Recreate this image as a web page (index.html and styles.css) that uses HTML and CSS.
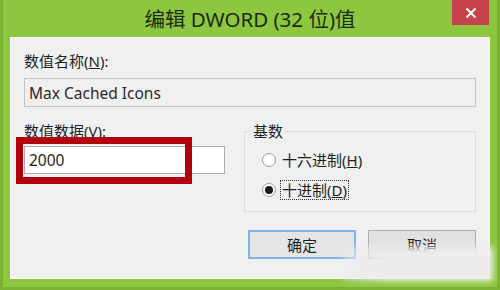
FILE: index.html
```html
<!DOCTYPE html>
<html lang="zh-CN">
<head>
    <meta charset="UTF-8">
    <title>编辑 DWORD (32 位)值</title>
    <link rel="stylesheet" href="styles.css">
</head>
<body>
    <div class="window">
        <div class="titlebar">
            <div class="title">编辑 DWORD (32 位)值</div>
            <div class="close-btn">
                <svg width="12" height="12" viewBox="0 0 12 12">
                    <path d="M1.5 1.5 L10.5 10.5 M10.5 1.5 L1.5 10.5" stroke="#fff" stroke-width="2" fill="none"/>
                </svg>
            </div>
        </div>

        <div class="client">
            <div class="field-label">数值名称(<u>N</u>):</div>
            <div class="textbox readonly">Max Cached Icons</div>

            <div class="value-row">
                <div class="data-col">
                    <div class="field-label">数值数据(<u>V</u>):</div>
                    <div class="textbox data">2000</div>
                    <!-- 红框标注 -->
                    <div class="highlight"></div>
                </div>

                <fieldset class="base-group">
                    <legend>基数</legend>
                    <div class="radio">
                        <span class="radio-circle"></span>
                        <span class="radio-text">十六进制(<u>H</u>)</span>
                    </div>
                    <div class="radio checked">
                        <span class="radio-circle"></span>
                        <span class="radio-text focused">十进制(<u>D</u>)</span>
                    </div>
                </fieldset>
            </div>

            <div class="buttons">
                <div class="btn default">确定</div>
                <div class="btn">取消</div>
            </div>
        </div>

        <div class="watermark"></div>
    </div>
</body>
</html>
```

FILE: styles.css
```css
* {
    margin: 0;
    padding: 0;
    box-sizing: border-box;
}

body {
    width: 500px;
    height: 290px;
    overflow: hidden;
    background: #8dc63f;
    font-family: "Noto Sans", "Noto Sans CJK SC", sans-serif;
    color: #1e1e1e;
}

.window {
    position: relative;
    height: 290px;
    background: #8dc63f;
    box-shadow: inset 3px 0 #7cb232, inset -3px 0 #7cb232, inset 0 -3px #7cb232;
}

.titlebar {
    position: relative;
    height: 37px;
}

.title {
    text-align: center;
    font-size: 20.5px;
    line-height: 38px;
    color: #1d2a12;
}

.close-btn {
    position: absolute;
    top: 0;
    right: 11px;
    width: 37px;
    height: 25px;
    background: #c7434b;
    display: flex;
    align-items: center;
    justify-content: center;
}

.client {
    margin: 0 10px;
    height: 242px;
    background: #f0f0f0;
    border: 1px solid #fbfbfb;
    padding: 15px 13px 0 13px;
}

.field-label {
    font-size: 15px;
    line-height: 16px;
    height: 16px;
    white-space: nowrap;
}

.textbox {
    font-size: 15.5px;
    padding-left: 4px;
    display: flex;
    align-items: center;
    white-space: nowrap;
}

.textbox.readonly {
    margin-top: 9px;
    height: 29px;
    border: 1px solid #c3c3c3;
    background: #f0f0f0;
    color: #2a2a2a;
}

.value-row {
    display: flex;
    margin-top: 16px;
}

.data-col {
    position: relative;
    width: 201px;
}

.textbox.data {
    margin-top: 7px;
    height: 28px;
    border: 1px solid #abadb3;
    background: #fff;
}

.highlight {
    position: absolute;
    left: -8px;
    top: 14px;
    width: 176px;
    height: 47px;
    border: 7px solid #b1000e;
}

.base-group {
    margin-left: 19px;
    width: 232px;
    border: 1px solid #dcdcdc;
    padding: 0 0 11px 17px;
}

.base-group legend {
    font-size: 15px;
    line-height: 16px;
    margin-left: -11px;
    padding: 0 2px;
}

.radio {
    display: flex;
    align-items: center;
    height: 20px;
    margin-top: 10px;
    font-size: 15px;
}

.radio:first-of-type {
    margin-top: 11px;
}

.radio-circle {
    width: 14px;
    height: 14px;
    border-radius: 50%;
    border: 1px solid #9a9a9a;
    background: #fff;
    display: flex;
    align-items: center;
    justify-content: center;
}

.radio.checked .radio-circle::after {
    content: "";
    width: 8px;
    height: 8px;
    border-radius: 50%;
    background: #1a1a1a;
}

.radio-text {
    margin-left: 4px;
    height: 20px;
    line-height: 18px;
    padding: 0 1px;
    border: 1px dotted transparent;
}

.radio-text.focused {
    border-color: #333;
}

.buttons {
    display: flex;
    justify-content: flex-end;
    gap: 12px;
    margin-top: 18px;
}

.btn {
    width: 108px;
    height: 29px;
    border: 1px solid #adadad;
    background: #e1e1e1;
    font-size: 15px;
    display: flex;
    align-items: center;
    justify-content: center;
}

.btn.default {
    border: 2px solid #7fb4e6;
    background: #e5e5e5;
}

.watermark {
    position: absolute;
    left: 343px;
    top: 247px;
    width: 150px;
    height: 34px;
    background: linear-gradient(90deg, rgba(236, 236, 236, 0.4), #ececec 30%, #ededed);
    filter: blur(3px);
}
```
